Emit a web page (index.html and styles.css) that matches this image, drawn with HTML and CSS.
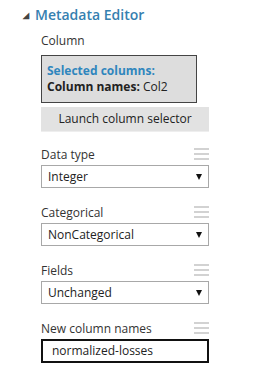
FILE: index.html
```html
<!DOCTYPE html>
<html lang="en">
<head>
    <meta charset="UTF-8">
    <meta name="viewport" content="width=device-width, initial-scale=1.0">
    <title>Metadata Editor</title>
    <link rel="stylesheet" href="styles.css">
</head>
<body>
    <div class="panel">
        <h2 class="panel-title"><span class="caret">&#9698;</span>Metadata Editor</h2>

        <div class="props">
            <div class="prop prop-column">
                <div class="prop-label">Column</div>
                <div class="colbox">
                    <div class="colbox-head">Selected columns:</div>
                    <div><b>Column names:</b> Col2</div>
                </div>
                <div class="launch">Launch column selector</div>
            </div>

            <div class="prop">
                <div class="prop-row">
                    <span class="prop-label">Data type</span>
                    <span class="grip"><i></i><i></i><i></i></span>
                </div>
                <div class="dropdown">
                    <span>Integer</span>
                    <span class="arrow"></span>
                </div>
            </div>

            <div class="prop">
                <div class="prop-row">
                    <span class="prop-label">Categorical</span>
                    <span class="grip"><i></i><i></i><i></i></span>
                </div>
                <div class="dropdown">
                    <span>NonCategorical</span>
                    <span class="arrow"></span>
                </div>
            </div>

            <div class="prop">
                <div class="prop-row">
                    <span class="prop-label">Fields</span>
                    <span class="grip"><i></i><i></i><i></i></span>
                </div>
                <div class="dropdown">
                    <span>Unchanged</span>
                    <span class="arrow"></span>
                </div>
            </div>

            <div class="prop">
                <div class="prop-row">
                    <span class="prop-label">New column names</span>
                    <span class="grip"><i></i><i></i><i></i></span>
                </div>
                <div class="textbox">normalized-losses</div>
            </div>
        </div>
    </div>
</body>
</html>
```

FILE: styles.css
```css
body { margin: 0; background: #fff; font-family: "Open Sans", "Noto Sans", sans-serif; font-size: 12px; color: #222; }
.panel { padding: 4px 0 0 23px; }
.panel-title { margin: 0; display: flex; align-items: center; font-size: 14px; font-weight: 600; color: #3580b0; height: 20px; }
.caret { font-size: 8px; color: #444; width: 12px; }
.props { margin-left: 18px; width: 168px; padding-top: 8px; }
.prop { margin-bottom: 16px; }
.prop-column { margin-bottom: 14px; }
.prop-row { display: flex; justify-content: space-between; align-items: center; height: 16px; margin-bottom: 3px; }
.prop-label { color: #333; display: block; }
.prop > .prop-label { margin-bottom: 6px; }
.grip { display: flex; flex-direction: column; gap: 3px; width: 15px; }
.grip i { display: block; height: 2px; background: #d2d2d2; }
.colbox { width: 149px; background: #ddd; border: 1px solid #444; padding: 7px 0 7px 5px; line-height: 16px; }
.colbox-head { color: #2f86bd; font-weight: 700; }
.colbox b { font-weight: 700; }
.launch { margin-top: 4px; background: #e2e2e2; height: 24px; line-height: 24px; text-align: center; color: #222; border-bottom: 1px solid #eee; }
.dropdown { height: 23px; border: 1px solid #a8a8a8; display: flex; align-items: center; justify-content: space-between; padding: 0 6px 0 6px; box-sizing: border-box; }
.arrow { width: 0; height: 0; border-left: 3px solid transparent; border-right: 3px solid transparent; border-top: 6px solid #111; }
.textbox { height: 24px; border: 2px solid #111; box-sizing: border-box; padding-left: 9px; line-height: 20px; }
```
